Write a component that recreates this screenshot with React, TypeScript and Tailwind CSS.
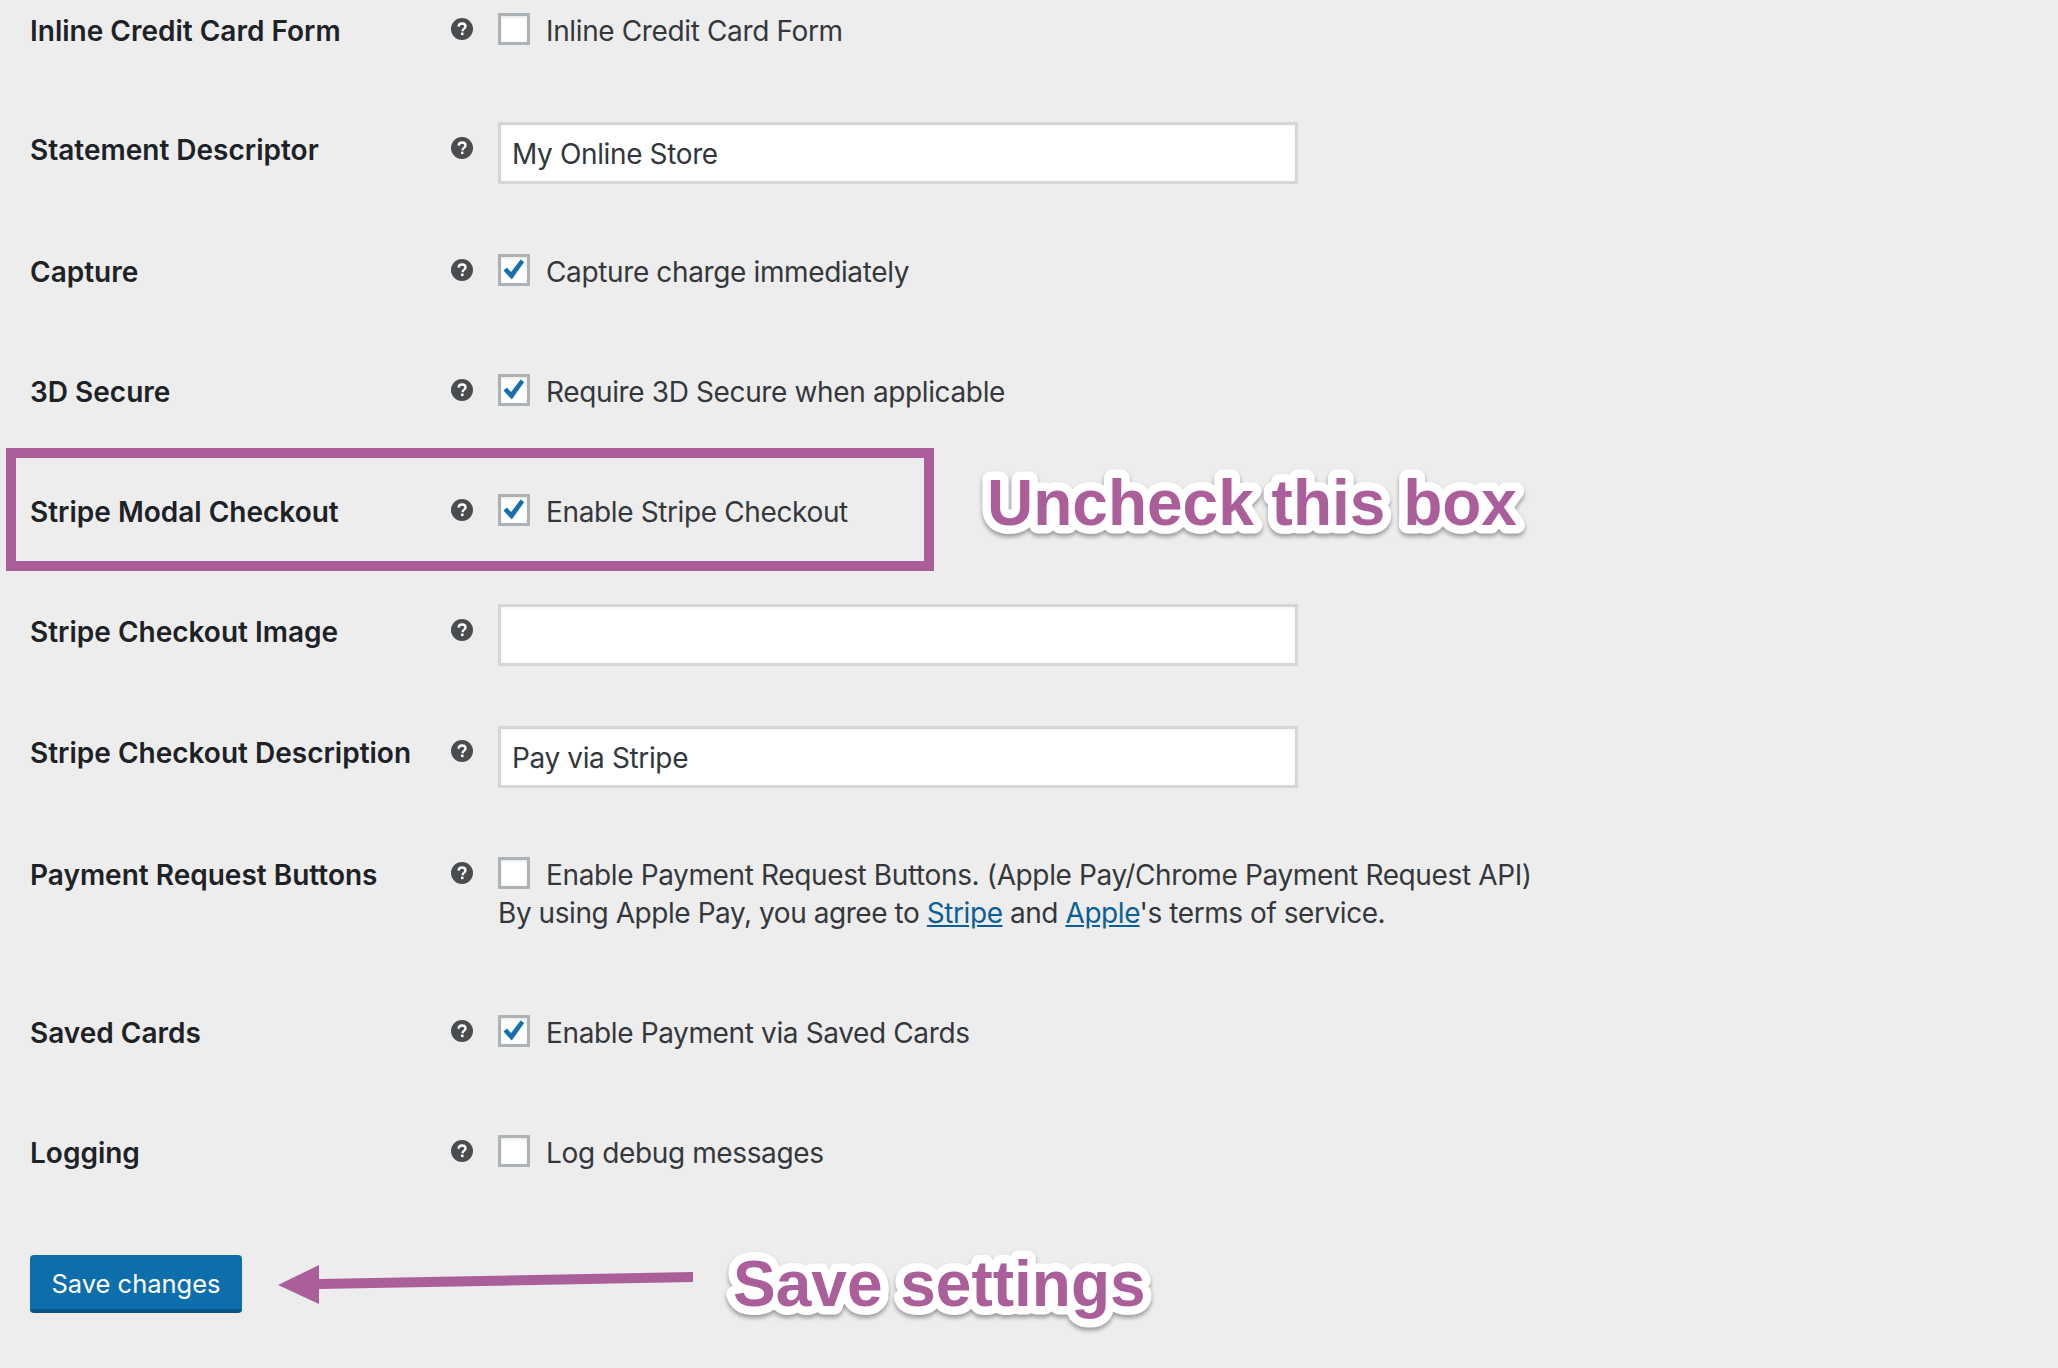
import React from "react";

function Help() {
  return (
    <svg viewBox="0 0 22 22" className="w-[22px] h-[22px] mt-[6px] shrink-0">
      <circle cx="11" cy="11" r="11" fill="#4a4d4f" />
      <path d="M7.6 8.6c.1-2 1.5-3.1 3.5-3.1 2 0 3.4 1.1 3.4 2.8 0 1.2-.6 1.9-1.6 2.6-.9.6-1.2 1-1.2 1.9v.4" fill="none" stroke="#fff" strokeWidth="2.3" />
      <rect x="10" y="14.6" width="2.5" height="2.5" fill="#fff" />
    </svg>
  );
}

function Box({ checked }: { checked?: boolean }) {
  return (
    <div className="w-[32px] h-[32px] mt-[1px] shrink-0 bg-white border-[3px] border-[#adb2b6] shadow-[inset_0_1px_3px_rgba(0,0,0,0.12)] flex items-center justify-center">
      {checked && (
        <svg viewBox="0 0 26 26" className="w-[26px] h-[26px]">
          <path d="M2.5 13.5l3.4-3 4.2 4.6L19.6 2.5l3.6 2.6-12.4 17.5z" fill="#1570ad" />
        </svg>
      )}
    </div>
  );
}

function Check({ checked, text }: { checked?: boolean; text: string }) {
  return (
    <div className="flex gap-[16px]">
      <Box checked={checked} />
      <span>{text}</span>
    </div>
  );
}

function Field({ value, offset }: { value: string; offset: string }) {
  return (
    <input
      readOnly
      value={value}
      className={`block w-[800px] h-[62px] bg-white border-[3px] border-[#d6d6d6] shadow-[inset_0_1px_3px_rgba(0,0,0,0.06)] pl-[11px] pt-[1px] text-[#32373c] tracking-[-0.37px] outline-none ${offset}`}
    />
  );
}

function Row({ label, height, children }: { label: string; height: string; children: React.ReactNode }) {
  return (
    <div className={`flex ${height}`}>
      <div className="w-[421px] shrink-0 font-semibold text-[#1d2227]">{label}</div>
      <div className="w-[47px] shrink-0">
        <Help />
      </div>
      <div className="flex-1 text-[#34383c] tracking-[-0.37px]">{children}</div>
    </div>
  );
}

function Callout({ text, x, y, w }: { text: string; x: number; y: number; w: number }) {
  return (
    <svg
      className="absolute overflow-visible drop-shadow-[0_3px_2px_rgba(0,0,0,0.35)]"
      style={{ left: x, top: y }}
      width={w}
      height="90"
    >
      <text
        x="0"
        y="60"
        fill="#ab5f9a"
        stroke="#fff"
        strokeWidth="17"
        strokeLinejoin="round"
        paintOrder="stroke"
        fontSize="64"
        fontWeight="700"
        fontFamily="'Liberation Sans', Arial, sans-serif"
      >
        {text}
      </text>
    </svg>
  );
}

export default function App() {
  return (
    <div className="relative w-[2058px] h-[1368px] overflow-hidden bg-[#ededed] pt-[12px] pl-[30px] text-[28px] leading-[38px] [font-family:Inter,'Liberation_Sans',sans-serif]">
      <Row label="Inline Credit Card Form" height="h-[119px]"><Check text="Inline Credit Card Form" /></Row>
      <Row label="Statement Descriptor" height="h-[122px]"><Field value="My Online Store" offset="-mt-[9px]" /></Row>
      <Row label="Capture" height="h-[120px]"><Check checked text="Capture charge immediately" /></Row>
      <Row label="3D Secure" height="h-[120px]"><Check checked text="Require 3D Secure when applicable" /></Row>
      <Row label="Stripe Modal Checkout" height="h-[120px]"><Check checked text="Enable Stripe Checkout" /></Row>
      <Row label="Stripe Checkout Image" height="h-[121px]"><Field value="" offset="-mt-[9px]" /></Row>
      <Row label="Stripe Checkout Description" height="h-[122px]"><Field value="Pay via Stripe" offset="-mt-[8px]" /></Row>
      <Row label="Payment Request Buttons" height="h-[158px]">
        <Check text="Enable Payment Request Buttons. (Apple Pay/Chrome Payment Request API)" />
        <div className="tracking-[-0.44px]">
          By using Apple Pay, you agree to <a className="text-[#0b5f97] underline">Stripe</a> and{" "}
          <a className="text-[#0b5f97] underline">Apple</a>'s terms of service.
        </div>
      </Row>
      <Row label="Saved Cards" height="h-[120px]"><Check checked text="Enable Payment via Saved Cards" /></Row>
      <Row label="Logging" height="h-[121px]"><Check text="Log debug messages" /></Row>
      <button className="block w-[212px] h-[58px] rounded-[4px] bg-[#0d6eab] border-b-[4px] border-[#0a5688] pt-[3px] text-white text-[25.5px] leading-none">
        Save changes
      </button>

      <div className="absolute left-[6px] top-[448px] w-[928px] h-[123px] border-[10px] border-[#ab5f9a]" />
      <Callout text="Uncheck this box" x={987} y={465} w={540} />
      <Callout text="Save settings" x={733} y={1246} w={420} />
      <svg className="absolute left-0 top-0 pointer-events-none" width="2058" height="1368">
        <polygon points="278,1285 319,1265 319,1279 693,1272 693,1282 319,1289 319,1304" fill="#ab5f9a" />
      </svg>
    </div>
  );
}
